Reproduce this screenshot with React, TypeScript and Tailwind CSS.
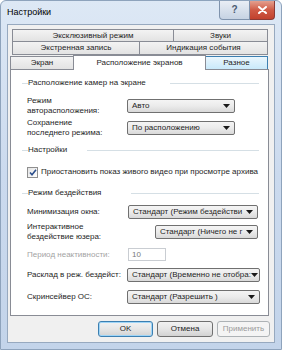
import React from 'react';

function Arrow() {
  return (
    <svg width="7" height="4" viewBox="0 0 7 4" className="shrink-0">
      <path d="M0 0h7L3.5 4z" fill="#1a1a1a" />
    </svg>
  );
}

function Combo({ value, className }: { value: string; className: string }) {
  return (
    <div
      className={`flex h-[14px] items-center rounded-[2px] border border-[#707070] bg-linear-to-b from-[#f4f4f4] via-[#ebebeb] to-[#d9d9d9] pl-[4px] pr-[4px] ${className}`}
    >
      <span className="flex-1 whitespace-nowrap leading-none">{value}</span>
      <Arrow />
    </div>
  );
}

function GroupHeader({ title, gap }: { title: string; gap: string }) {
  return (
    <div className="flex h-[10px] items-center">
      <div className="h-px w-[6px] bg-[#d5dfe5]" />
      <span className="whitespace-nowrap leading-none">{title}</span>
      <div className={`h-px flex-1 bg-[#d5dfe5] ${gap} mr-[9px]`} />
    </div>
  );
}

function Tab({ label, className }: { label: string; className: string }) {
  return (
    <div
      className={`flex items-center justify-center border border-[#898c95] bg-linear-to-b from-[#f3f3f3] to-[#e3e3e3] leading-none ${className}`}
    >
      {label}
    </div>
  );
}

function Btn({ label, kind }: { label: string; kind?: 'default' | 'disabled' }) {
  const border =
    kind === 'default'
      ? 'border-[#3c7fb1] shadow-[inset_0_0_0_1px_#9fd5f7]'
      : kind === 'disabled'
        ? 'border-[#adb2b5] text-[#9a9a9a]'
        : 'border-[#707070]';
  const bg =
    kind === 'disabled'
      ? 'bg-[#f4f4f4]'
      : 'bg-linear-to-b from-[#f2f2f2] via-[#e6e6e6] to-[#d2d2d2]';
  return (
    <div
      className={`flex h-[16px] items-center justify-center rounded-[3px] border leading-none ${border} ${bg}`}
    >
      {label}
    </div>
  );
}

export default function App() {
  return (
    <div className="relative flex h-[350px] w-[282px] flex-col overflow-hidden rounded-t-[6px] border border-[#8ea3bc] bg-linear-to-b from-[#dde8f5] via-[#cbdaee] to-[#c3d4ea] font-['Liberation_Sans',Arial,sans-serif] text-[8px] text-[#1e1e1e]">
      {/* title bar */}
      <div className="flex h-[23px] shrink-0 items-start">
        <span className="ml-[6px] mt-[7px] text-[9px] leading-none text-black">Настройки</span>
        <div className="ml-auto mr-[6px] flex">
          <div className="flex h-[19px] w-[31px] items-center justify-center rounded-bl-[4px] border border-t-0 border-[#7f93ad] bg-linear-to-b from-[#e9eef5] to-[#c6d3e3] text-[10px] font-bold leading-none text-[#4a5a70]">
            ?
          </div>
          <div className="flex h-[19px] w-[25px] items-center justify-center rounded-br-[4px] border border-l-0 border-t-0 border-[#8a3a35] bg-linear-to-b from-[#e3a08f] via-[#cf5a45] to-[#c2412d]">
            <svg width="9" height="8" viewBox="0 0 9 8">
              <path d="M1 1l7 6M8 1l-7 6" stroke="#fff" strokeWidth="2" strokeLinecap="round" />
            </svg>
          </div>
        </div>
      </div>

      {/* client area */}
      <div className="mx-[6px] mb-[6px] flex flex-1 flex-col border border-[#97a9bf] bg-[#f0f0f0]">
        <div className="ml-[4px] mt-[4px] flex w-[256px] flex-col">
          <div className="flex h-[13px]">
            <Tab label="Эксклюзивный режим" className="w-[162px]" />
            <Tab label="Звуки" className="-ml-px w-[95px]" />
          </div>
          <div className="-mt-px flex h-[14px]">
            <Tab label="Экстренная запись" className="w-[128px]" />
            <Tab label="Индикация события" className="-ml-px w-[129px]" />
          </div>
          <div className="-ml-[2px] flex h-[14px] items-end">
            <Tab label="Экран" className="h-[13px] w-[64px] border-b-0" />
            <div className="relative z-10 -mb-px -ml-px flex h-[15px] w-[133px] items-start justify-center border border-b-0 border-[#898c95] bg-white pt-[3px] leading-none">
              Расположение экранов
            </div>
            <div className="-ml-px flex h-[13px] w-[63px] items-center justify-center border border-b-0 border-[#3c7fb1] bg-linear-to-b from-[#eaf6fd] to-[#c9e9fa] leading-none">
              Разное
            </div>
          </div>
        </div>

        {/* tab page */}
        <div className="ml-[2px] flex h-[247px] w-[259px] flex-col border border-[#898c95] bg-white">
          <div className="ml-[11px] mt-[8px]">
            <GroupHeader title="Расположение камер на экране" gap="ml-[24px]" />
          </div>

          <div className="mt-[8px] flex h-[20px] items-center">
            <div className="ml-[16px] w-[100px] leading-[10px]">
              Режим
              <br />
              авторасположения:
            </div>
            <Combo value="Авто" className="w-[108px]" />
          </div>
          <div className="mt-[2px] flex h-[20px] items-center">
            <div className="ml-[16px] w-[100px] leading-[10px]">
              Сохранение
              <br />
              последнего режима:
            </div>
            <Combo value="По расположению" className="w-[108px]" />
          </div>

          <div className="ml-[11px] mt-[7px]">
            <GroupHeader title="Настройки" gap="ml-[20px]" />
          </div>

          <div className="ml-[16px] mt-[11px] flex h-[12px] items-center gap-[3px]">
            <div className="flex h-[11px] w-[11px] items-center justify-center border border-[#8f8f8f] bg-linear-to-br from-[#e4e4e4] to-[#ffffff]">
              <svg width="8" height="7" viewBox="0 0 8 7">
                <path d="M1 3.5l2 2.2L7 0.8" fill="none" stroke="#2c4f8c" strokeWidth="1.6" />
              </svg>
            </div>
            <span className="whitespace-nowrap leading-none">
              Приостановить показ живого видео при просмотре архива
            </span>
          </div>

          <div className="ml-[11px] mt-[10px]">
            <GroupHeader title="Режим бездействия" gap="ml-[30px]" />
          </div>

          <div className="mt-[7px] flex h-[14px] items-center">
            <div className="ml-[16px] w-[101px] leading-none">Минимизация окна:</div>
            <Combo value="Стандарт (Режим бездействи" className="w-[130px]" />
          </div>
          <div className="mt-[3px] flex h-[20px] items-center">
            <div className="ml-[16px] w-[128px] leading-[10px]">
              Интерактивное
              <br />
              бездействие юзера:
            </div>
            <Combo value="Стандарт (Ничего не г" className="w-[103px]" />
          </div>
          <div className="mt-[6px] flex h-[13px] items-center">
            <div className="ml-[16px] w-[101px] leading-none text-[#a3a3a3]">Период неактивности:</div>
            <div className="flex h-[13px] w-[38px] items-center border border-[#c9cdd2] bg-white pl-[3px] leading-none text-[#7a7a7a]">
              10
            </div>
          </div>
          <div className="mt-[7px] flex h-[14px] items-center">
            <div className="ml-[16px] w-[100px] whitespace-nowrap leading-none">Расклад в реж. бездейст:</div>
            <Combo value="Стандарт (Временно не отобра:" className="w-[133px]" />
          </div>
          <div className="mt-[8px] flex h-[14px] items-center">
            <div className="ml-[16px] w-[100px] leading-none">Скринсейвер ОС:</div>
            <Combo value="Стандарт (Разрешить )" className="w-[133px]" />
          </div>
        </div>

        {/* buttons */}
        <div className="mt-[5px] grid grid-cols-[55px_56px_53px] gap-x-[4px] self-end pr-[4px]">
          <Btn label="OK" kind="default" />
          <Btn label="Отмена" />
          <Btn label="Применить" kind="disabled" />
        </div>
      </div>
    </div>
  );
}
